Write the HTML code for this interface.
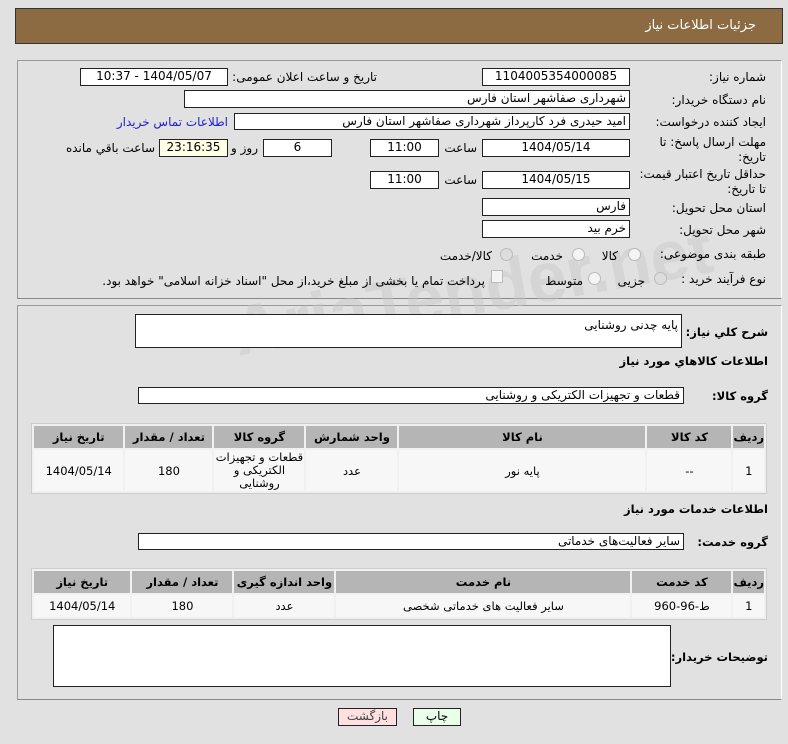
<!DOCTYPE html><html><head><meta charset="utf-8"><style>
body{margin:0;width:788px;height:744px;background:#e1e1e1;font-family:"DejaVu Sans","Liberation Sans",sans-serif;font-size:12px;color:#000;position:relative;overflow:hidden}
div,span{position:absolute;box-sizing:border-box}
.hd{left:15px;top:8px;width:768px;height:36px;background:#8c6b43;border:1px solid #333;color:#fff;font-size:13px}
.pn{border:1px solid #999;border-right-color:#fff;border-bottom-color:#888;left:17px;width:765px}
.l{direction:rtl;white-space:nowrap;text-align:right}
.b{background:#fff;border:1px solid #222;direction:rtl;text-align:center;line-height:15px;white-space:nowrap;overflow:hidden}
.br{text-align:right;padding-right:3px}
.bold{font-weight:bold;font-size:11.5px}
.rad{width:13px;height:13px;border-radius:50%;border:1px solid #bbb;background:#f4f4f4}
table{position:absolute;border-collapse:separate;border-spacing:2px;background:#f0f0f0;border:1px solid #ccc;direction:rtl;font-size:11.5px}
th{background:#b5b5b5;font-weight:bold;height:22px;padding:0}
td{background:#f7f7f7;text-align:center;padding:0}
.wm{left:230px;top:250px;font-size:70px;font-weight:bold;color:#c8c8c8;opacity:.45;transform:rotate(-10deg);white-space:nowrap;font-family:"Liberation Sans",sans-serif}
</style></head><body>
<div class="hd"><span class="l" style="right:26px;top:9px">جزئیات اطلاعات نیاز</span></div>
<div class="pn" style="top:60px;height:239px"></div>
<div class="pn" style="top:305px;height:395px"></div>
<div class="wm">AriaTender.net</div>

<span class="l" style="right:22px;top:70px">شماره نیاز:</span>
<div class="b" style="left:482px;top:68px;width:148px;height:18px">1104005354000085</div>
<span class="l" style="right:411px;top:70px">تاریخ و ساعت اعلان عمومی:</span>
<div class="b" style="left:80px;top:68px;width:148px;height:18px">1404/05/07 - 10:37</div>

<span class="l" style="right:22px;top:93px">نام دستگاه خریدار:</span>
<div class="b br" style="left:184px;top:90px;width:446px;height:18px">شهرداری صفاشهر استان فارس</div>

<span class="l" style="right:22px;top:115px">ایجاد کننده درخواست:</span>
<div class="b br" style="left:234px;top:113px;width:396px;height:17px">امید حیدری فرد کارپرداز شهرداری صفاشهر استان فارس</div>
<span class="l" style="right:560px;top:115px;color:#2020d0">اطلاعات تماس خریدار</span>

<span class="l" style="right:22px;top:135px;line-height:15px">مهلت ارسال پاسخ: تا<br>تاریخ:</span>
<div class="b" style="left:482px;top:139px;width:148px;height:18px">1404/05/14</div>
<span class="l" style="right:311px;top:141px">ساعت</span>
<div class="b" style="left:370px;top:139px;width:69px;height:18px">11:00</div>
<div class="b" style="left:263px;top:139px;width:69px;height:18px">6</div>
<span class="l" style="right:530px;top:141px">روز و</span>
<div class="b" style="left:159px;top:139px;width:69px;height:18px;background:#ffffe6">23:16:35</div>
<span class="l" style="right:633px;top:141px">ساعت باقي مانده</span>

<span class="l" style="right:22px;top:167px;line-height:15px">حداقل تاریخ اعتبار قیمت:<br>تا تاریخ:</span>
<div class="b" style="left:482px;top:171px;width:148px;height:18px">1404/05/15</div>
<span class="l" style="right:311px;top:173px">ساعت</span>
<div class="b" style="left:370px;top:171px;width:69px;height:18px">11:00</div>

<span class="l" style="right:22px;top:201px">استان محل تحویل:</span>
<div class="b br" style="left:482px;top:198px;width:148px;height:18px">فارس</div>
<span class="l" style="right:22px;top:223px">شهر محل تحویل:</span>
<div class="b br" style="left:482px;top:220px;width:148px;height:18px">خرم بید</div>

<span class="l" style="right:22px;top:247px">طبقه بندی موضوعی:</span>
<div class="rad" style="left:628px;top:248px"></div><span class="l" style="right:170px;top:249px">کالا</span>
<div class="rad" style="left:572px;top:248px"></div><span class="l" style="right:225px;top:249px">خدمت</span>
<div class="rad" style="left:500px;top:248px;background:#ddd"></div><span class="l" style="right:296px;top:249px">کالا/خدمت</span>

<span class="l" style="right:22px;top:272px">نوع فرآیند خرید :</span>
<div class="rad" style="left:654px;top:272px;background:#ddd"></div><span class="l" style="right:143px;top:274px">جزیی</span>
<div class="rad" style="left:588px;top:272px"></div><span class="l" style="right:205px;top:274px">متوسط</span>
<div style="left:491px;top:270px;width:12px;height:13px;border:1px solid #bbb;background:#f4f4f4"></div>
<span class="l" style="right:303px;top:274px">پرداخت تمام یا بخشی از مبلغ خرید،از محل "اسناد خزانه اسلامی" خواهد بود.</span>

<span class="l bold" style="right:20px;top:325px">شرح کلي نیاز:</span>
<div class="b br" style="left:135px;top:314px;width:547px;height:34px;text-align:right;line-height:20px">پایه چدنی روشنایی</div>
<span class="l bold" style="right:20px;top:354px">اطلاعات کالاهاي مورد نیاز</span>
<span class="l bold" style="right:20px;top:389px">گروه کالا:</span>
<div class="b br" style="left:138px;top:387px;width:546px;height:17px">قطعات و تجهیزات الکتریکی و روشنایی</div>

<table style="left:31px;top:423px;width:736px">
<tr><th style="width:25px">ردیف</th><th style="width:84px">کد کالا</th><th style="width:246px">نام کالا</th><th style="width:91px">واحد شمارش</th><th style="width:90px">گروه کالا</th><th style="width:87px">تعداد / مقدار</th><th>تاریخ نیاز</th></tr>
<tr style="height:41px"><td>1</td><td>--</td><td>پایه نور</td><td>عدد</td><td style="line-height:13px">قطعات و تجهیزات الکتریکی و روشنایی</td><td>180</td><td>1404/05/14</td></tr>
</table>

<span class="l bold" style="right:20px;top:502px">اطلاعات خدمات مورد نیاز</span>
<span class="l bold" style="right:20px;top:535px">گروه خدمت:</span>
<div class="b br" style="left:138px;top:533px;width:546px;height:17px">سایر فعالیت‌های خدماتی</div>

<table style="left:31px;top:568px;width:736px">
<tr><th style="width:25px">ردیف</th><th style="width:99px">کد خدمت</th><th style="width:294px">نام خدمت</th><th style="width:100px">واحد اندازه گیری</th><th style="width:100px">تعداد / مقدار</th><th>تاریخ نیاز</th></tr>
<tr style="height:22px"><td>1</td><td>ط-96-960</td><td>سایر فعالیت های خدماتی شخصی</td><td>عدد</td><td>180</td><td>1404/05/14</td></tr>
</table>

<span class="l bold" style="right:20px;top:650px">توضیحات خریدار:</span>
<div class="b" style="left:53px;top:625px;width:618px;height:62px"></div>

<div class="b" style="left:338px;top:708px;width:59px;height:18px;background:#ffe0e0;color:#444">بازگشت</div>
<div class="b" style="left:413px;top:708px;width:48px;height:18px;background:#eaffea">چاپ</div>
</body></html>
